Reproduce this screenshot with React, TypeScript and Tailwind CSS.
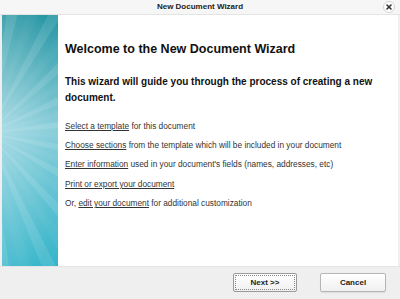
import React from 'react'

// ---------------------------------------------------------------------------
// Sidebar artwork: teal gradient with faint sunburst rays
// ---------------------------------------------------------------------------
const RAYS = Array.from({ length: 40 }, (_, i) => {
  const a0 = ((i * 9 - 90) * Math.PI) / 180
  const a1 = ((i * 9 - 85) * Math.PI) / 180
  const cx = -14
  const cy = 118
  const r = 400
  return `M${cx} ${cy} L${cx + r * Math.cos(a0)} ${cy + r * Math.sin(a0)} L${cx + r * Math.cos(a1)} ${cy + r * Math.sin(a1)} Z`
})

const SideArt = () => (
  <svg width="56" height="251" viewBox="0 0 56 251" preserveAspectRatio="none" aria-hidden="true">
    <defs>
      <linearGradient id="teal" x1="0" y1="0" x2="0" y2="1">
        <stop offset="0" stopColor="#2797a4" />
        <stop offset="0.45" stopColor="#8ccfdb" />
        <stop offset="0.55" stopColor="#7ccad8" />
        <stop offset="1" stopColor="#36b5ca" />
      </linearGradient>
      <radialGradient id="glow" cx="0" cy="0.47" r="0.9">
        <stop offset="0" stopColor="#ffffff" stopOpacity="0.25" />
        <stop offset="1" stopColor="#ffffff" stopOpacity="0" />
      </radialGradient>
    </defs>
    <rect width="56" height="251" fill="url(#teal)" />
    <rect width="56" height="251" fill="url(#glow)" />
    {RAYS.map((d, i) => (
      <path key={i} d={d} fill="#ffffff" fillOpacity={i % 2 ? 0.11 : 0.03} />
    ))}
  </svg>
)

const STEPS: { link: string; rest: string; prefix?: string }[] = [
  { link: 'Select a template', rest: ' for this document' },
  { link: 'Choose sections', rest: ' from the template which will be included in your document' },
  { link: 'Enter information', rest: " used in your document's fields (names, addresses, etc)" },
  { link: 'Print or export your document', rest: '' },
  { prefix: 'Or, ', link: 'edit your document', rest: ' for additional customization' },
]

export default function App() {
  return (
    <div className="w-[400px] h-[299px] bg-[#efefef] flex flex-col overflow-hidden" style={{ fontFamily: '"Liberation Sans", Arial, sans-serif' }}>
      {/* Title bar */}
      <div className="relative h-[15px] shrink-0 bg-[#f6f6f6] border-b border-[#e4e4e4] flex items-center justify-center">
        <span className="text-[8px] font-bold text-[#222] leading-none">
          New Document Wizard
        </span>
        <span className="absolute right-[5px] top-[1px] w-[12px] h-[12px] rounded-full border border-[#d4d4d4] bg-white flex items-center justify-center">
          <svg width="6" height="6" viewBox="0 0 6 6" fill="none" stroke="#333" strokeWidth="1.6" strokeLinecap="round">
            <line x1="1" y1="1" x2="5" y2="5" />
            <line x1="5" y1="1" x2="1" y2="5" />
          </svg>
        </span>
      </div>

      {/* Body */}
      <div className="flex h-[251px] shrink-0 mx-[2px] bg-white">
        <SideArt />
        <div className="flex-1 pl-[7px] pt-[28px] text-[#333]">
          <h1 className="text-[12.5px] font-bold leading-none text-[#111]">Welcome to the New Document Wizard</h1>
          <p className="mt-[18px] text-[10px] font-bold leading-[16px] text-[#111]">
            This wizard will guide you through the process of creating a new document.
          </p>
          <div className="mt-[15px] flex flex-col gap-[9px] text-[8.3px] leading-[10.4px]">
            {STEPS.map((s) => (
              <div key={s.link}>
                {s.prefix}
                <span className="underline cursor-pointer">{s.link}</span>
                {s.rest}
              </div>
            ))}
          </div>
        </div>
      </div>

      {/* Footer */}
      <div className="flex-1 border-t border-[#e4e4e4] flex items-start justify-end gap-[23px] pt-[6px] pr-[14px]">
        <button className="w-[64px] h-[19px] bg-gradient-to-b from-white to-[#f0f0f0] border border-[#9a9a9a] rounded-[2px] text-[8px] font-bold text-[#222] outline-1 outline-dotted outline-offset-[-3px] outline-[#888]">
          Next &gt;&gt;
        </button>
        <button className="w-[66px] h-[19px] bg-gradient-to-b from-white to-[#f0f0f0] border border-[#b5b5b5] rounded-[2px] text-[8px] font-bold text-[#222] shadow-[0_1px_1px_rgba(0,0,0,0.08)]">
          Cancel
        </button>
      </div>
    </div>
  )
}
